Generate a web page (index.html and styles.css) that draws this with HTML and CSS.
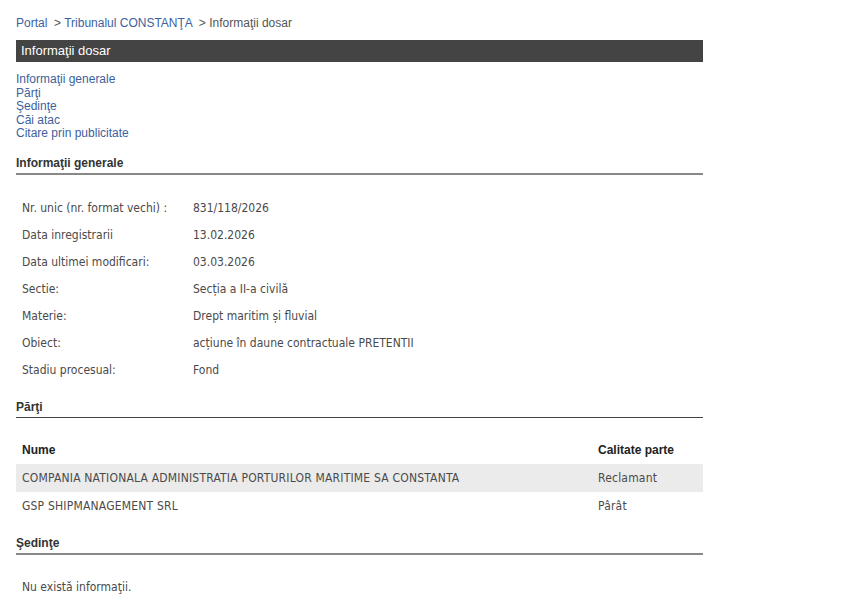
FILE: index.html
```html
<!DOCTYPE html>
<html lang="ro">
<head>
<meta charset="utf-8">
<title>Informaţii dosar</title>
<link rel="stylesheet" href="styles.css">
</head>
<body>
<div class="page">
  <div class="crumbs"><a href="#">Portal</a> &nbsp;&gt; <a href="#">Tribunalul CONSTANŢA</a> &nbsp;&gt; Informaţii dosar</div>
  <div class="bar">Informaţii dosar</div>
  <ul class="toc">
    <li><a href="#">Informaţii generale</a></li>
    <li><a href="#">Părţi</a></li>
    <li><a href="#">Şedinţe</a></li>
    <li><a href="#">Căi atac</a></li>
    <li><a href="#">Citare prin publicitate</a></li>
  </ul>
  <h2 class="sec sec-gen">Informaţii generale</h2>
  <table class="info">
    <tr><td class="lbl">Nr. unic (nr. format vechi) :</td><td>831/118/2026</td></tr>
    <tr><td class="lbl">Data inregistrarii</td><td>13.02.2026</td></tr>
    <tr><td class="lbl">Data ultimei modificari:</td><td>03.03.2026</td></tr>
    <tr><td class="lbl">Sectie:</td><td>Secția a II-a civilă</td></tr>
    <tr><td class="lbl">Materie:</td><td>Drept maritim și fluvial</td></tr>
    <tr><td class="lbl">Obiect:</td><td>acțiune în daune contractuale PRETENTII</td></tr>
    <tr><td class="lbl">Stadiu procesual:</td><td>Fond</td></tr>
  </table>
  <h2 class="sec sec-dark">Părţi</h2>
  <table class="parti">
    <thead><tr><th>Nume</th><th class="c2">Calitate parte</th></tr></thead>
    <tbody>
      <tr class="alt"><td>COMPANIA NATIONALA ADMINISTRATIA PORTURILOR MARITIME SA CONSTANTA</td><td class="c2">Reclamant</td></tr>
      <tr><td>GSP SHIPMANAGEMENT SRL</td><td class="c2">Pârât</td></tr>
    </tbody>
  </table>
  <h2 class="sec sec-gray">Şedinţe</h2>
  <p class="none">Nu există informaţii.</p>
</div>
</body>
</html>
```
FILE: styles.css
```css
html, body { margin: 0; padding: 0; background: #fff; }
body { font-family: "Liberation Sans", Arial, sans-serif; font-size: 12px; color: #333; }
.page { width: 687px; padding: 16px 0 0 16px; }
a { color: #3d5f9e; text-decoration: none; }
.crumbs { font-size: 12px; color: #555; line-height: 14px; height: 14px; }
.bar { margin-top: 10px; background: #444; color: #fff; font-size: 13px; height: 22px; line-height: 22px; padding-left: 5px; }
.toc { list-style: none; margin: 11px 0 0; padding: 0; }
.toc li { line-height: 13.5px; font-size: 12px; }
.sec { font-size: 12px; font-weight: bold; color: #333; margin: 0; padding: 0 0 3px; line-height: 14px; }
.sec-gen { margin-top: 15px; border-bottom: 2px solid #888; }
.sec-dark { margin-top: 16px; border-bottom: 1px solid #444; }
.sec-gray { margin-top: 16px; border-bottom: 2px solid #888; }
.info, .parti { border-collapse: collapse; font-family: "DejaVu Sans Condensed", "DejaVu Sans", sans-serif; font-size: 12px; color: #4a4a4a; }
.info { margin-top: 20px; }
.info td { height: 27px; padding: 0 0 0 6px; vertical-align: middle; }
.info td.lbl { width: 165px; }
.parti { width: 687px; margin-top: 18px; }
.parti th { text-align: left; font-family: "Liberation Sans", Arial, sans-serif; font-weight: bold; font-size: 12px; color: #222; height: 28px; padding: 0 0 0 6px; }
.parti td { height: 28px; padding: 0 0 0 6px; letter-spacing: 0.2px; }
.parti .c2 { width: 105px; padding-left: 0; }
.parti tr.alt td { background: #ebebeb; }
.none { font-family: "DejaVu Sans Condensed", "DejaVu Sans", sans-serif; font-size: 12px; color: #4a4a4a; margin: 25px 0 0 6px; }
```
